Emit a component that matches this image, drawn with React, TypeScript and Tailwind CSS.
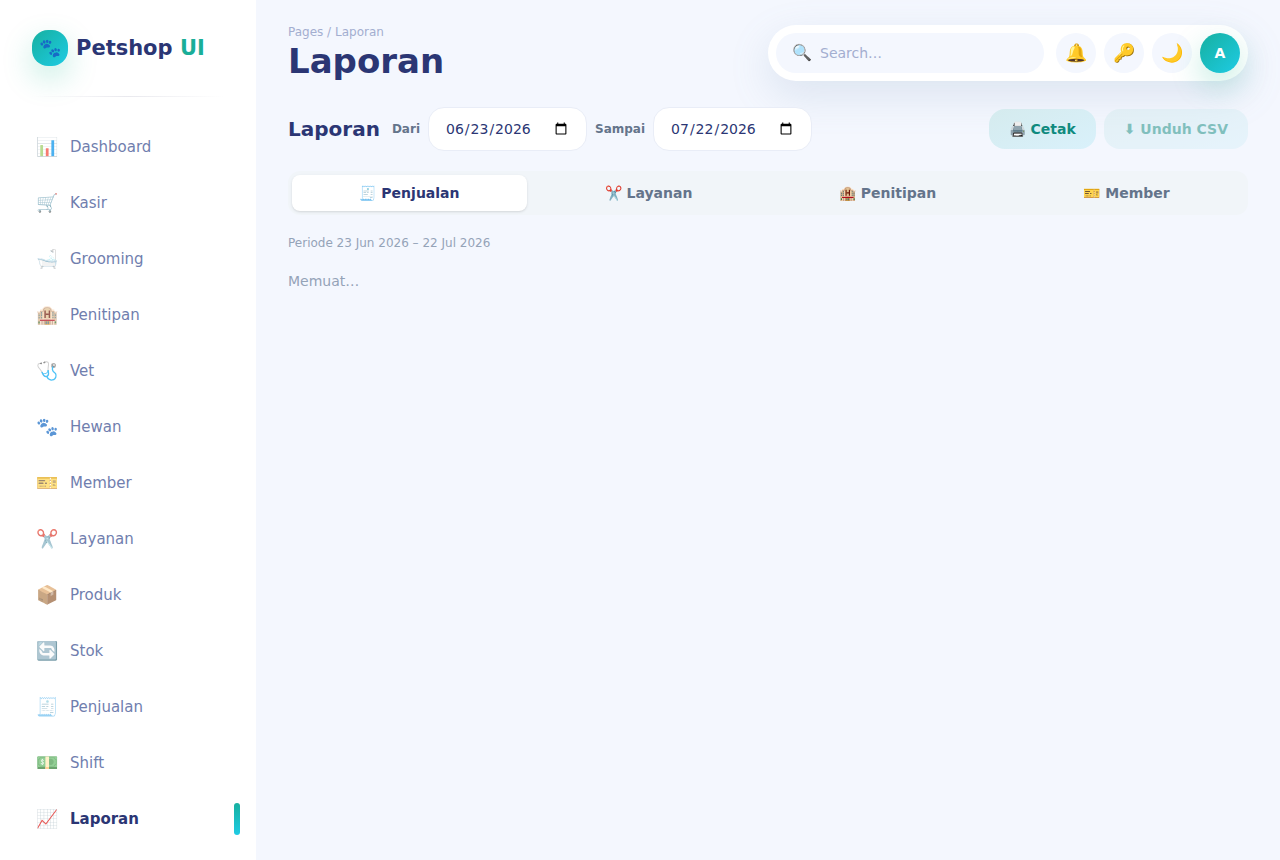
import { useState } from "react";

const navItems = [
  { icon: "📊", label: "Dashboard" },
  { icon: "🛒", label: "Kasir" },
  { icon: "🛁", label: "Grooming" },
  { icon: "🏨", label: "Penitipan" },
  { icon: "🩺", label: "Vet" },
  { icon: "🐾", label: "Hewan" },
  { icon: "🎫", label: "Member" },
  { icon: "✂️", label: "Layanan" },
  { icon: "📦", label: "Produk" },
  { icon: "🔄", label: "Stok" },
  { icon: "🧾", label: "Penjualan" },
  { icon: "💵", label: "Shift" },
  { icon: "📈", label: "Laporan" },
];

const tabs = [
  { icon: "🧾", label: "Penjualan" },
  { icon: "✂️", label: "Layanan" },
  { icon: "🏨", label: "Penitipan" },
  { icon: "🎫", label: "Member" },
];

const actions = [
  { icon: "🔔", label: "Notifikasi" },
  { icon: "🔑", label: "Ganti password" },
  { icon: "🌙", label: "Mode gelap" },
];

function Sidebar() {
  return (
    <aside className="sticky top-0 flex h-screen w-64 shrink-0 flex-col overflow-hidden bg-white">
      <div className="flex h-24 shrink-0 items-center gap-2 px-8">
        <span className="flex size-9 items-center justify-center rounded-2xl bg-linear-to-br from-[#17b0a0] to-[#1fcbe4] text-lg shadow-[0_12px_30px_rgba(20,184,140,0.25)]">
          🐾
        </span>
        <span className="text-[21px] leading-9 font-bold text-[#2b3674]">
          Petshop <span className="text-[#1aae98]">UI</span>
        </span>
      </div>
      <div className="mx-8 h-px shrink-0 bg-linear-to-r from-transparent via-[#e9e9ee] to-transparent" />
      <nav className="mt-[26px] flex flex-col gap-2 px-4">
        {navItems.map((item) => {
          const active = item.label === "Laporan";
          return (
            <a
              key={item.label}
              href={"#" + item.label.toLowerCase()}
              aria-current={active ? "page" : undefined}
              className={
                active
                  ? "relative flex h-12 items-center gap-3 pl-5 text-[15px] font-bold text-[#2b3674]"
                  : "relative flex h-12 items-center gap-3 pl-5 text-[15px] text-[#707eae]"
              }
            >
              <span className={active ? "w-[22px] text-center text-lg opacity-85" : "w-[22px] text-center text-lg opacity-70"}>
                {item.icon}
              </span>
              {item.label}
              {active && (
                <span className="absolute top-2 right-0 h-8 w-1.5 rounded-full bg-linear-to-b from-[#17b0a0] to-[#1fcbe4]" />
              )}
            </a>
          );
        })}
      </nav>
    </aside>
  );
}

function Header() {
  return (
    <header className="flex items-center justify-between">
      <div>
        <p className="text-xs leading-4 text-[#a3aed0]">Pages / Laporan</p>
        <h1 className="text-[34px] leading-[42px] font-bold text-[#2b3674]">Laporan</h1>
      </div>
      <div className="flex h-14 items-center gap-2 rounded-full bg-white px-2 shadow-[0_14px_40px_rgba(112,144,176,0.18)]">
        <label className="mr-1 flex h-10 w-67 items-center gap-2 rounded-full bg-[#f4f7fe] px-4 text-base">
          <span>🔍</span>
          <input
            type="search"
            aria-label="Search"
            placeholder="Search…"
            className="min-w-0 flex-1 bg-transparent text-sm text-[#2b3674] outline-none placeholder:text-[#a3aed0]"
          />
        </label>
        {actions.map((action) => (
          <button
            key={action.label}
            type="button"
            aria-label={action.label}
            className="flex size-10 items-center justify-center rounded-full bg-[#f4f7fe] text-lg"
          >
            {action.icon}
          </button>
        ))}
        <button
          type="button"
          className="flex size-10 items-center justify-center rounded-full bg-linear-to-br from-[#17b0a0] to-[#1fcbe4] text-sm font-bold text-white shadow-[0_12px_30px_rgba(20,184,140,0.25)]"
        >
          A
        </button>
      </div>
    </header>
  );
}

const dateClass =
  "h-11 w-[159px] rounded-2xl border border-[#e9edf7] bg-white px-4 text-sm text-[#2b3674] outline-none";

export default function App() {
  const [tab, setTab] = useState("Penjualan");
  return (
    <div className="flex min-h-screen bg-[#f4f7fe] font-['DejaVu_Sans',sans-serif]">
      <Sidebar />
      <main className="min-w-0 flex-1 px-8 pt-6">
        <Header />
        <div className="mt-[25px] flex items-center gap-2">
          <h2 className="mr-1 text-xl font-bold text-[#2b3674]">Laporan</h2>
          <label htmlFor="from" className="text-xs font-bold text-[#64748b]">Dari</label>
          <input id="from" type="date" defaultValue="2026-06-23" className={dateClass} />
          <label htmlFor="to" className="text-xs font-bold text-[#64748b]">Sampai</label>
          <input id="to" type="date" defaultValue="2026-07-22" className={dateClass} />
          <button type="button" className="ml-auto h-10 rounded-2xl bg-linear-to-br from-[#d5ebee] to-[#d9f1fb] px-5 text-sm font-bold text-[#0f8a7e]">
            🖨️ Cetak
          </button>
          <button type="button" disabled className="h-10 rounded-2xl bg-linear-to-br from-[#d5ebee] to-[#d9f1fb] px-5 text-sm font-bold text-[#0f8a7e] opacity-50">
            ⬇ Unduh CSV
          </button>
        </div>
        <div role="tablist" className="mt-5 grid grid-cols-4 gap-1 rounded-xl bg-[#f1f5f9] p-1">
          {tabs.map((item) => (
            <button
              key={item.label}
              type="button"
              role="tab"
              aria-selected={tab === item.label}
              onClick={() => setTab(item.label)}
              className={
                tab === item.label
                  ? "h-9 rounded-lg bg-white text-sm font-bold text-[#2b3674] shadow-sm"
                  : "h-9 rounded-lg text-sm font-bold text-[#64748b]"
              }
            >
              {item.icon} {item.label}
            </button>
          ))}
        </div>
        <p className="mt-5 text-xs leading-4 text-[#94a3b8]">Periode 23 Jun 2026 – 22 Jul 2026</p>
        <p className="mt-5 text-sm text-[#94a3b8]">Memuat…</p>
      </main>
    </div>
  );
}
